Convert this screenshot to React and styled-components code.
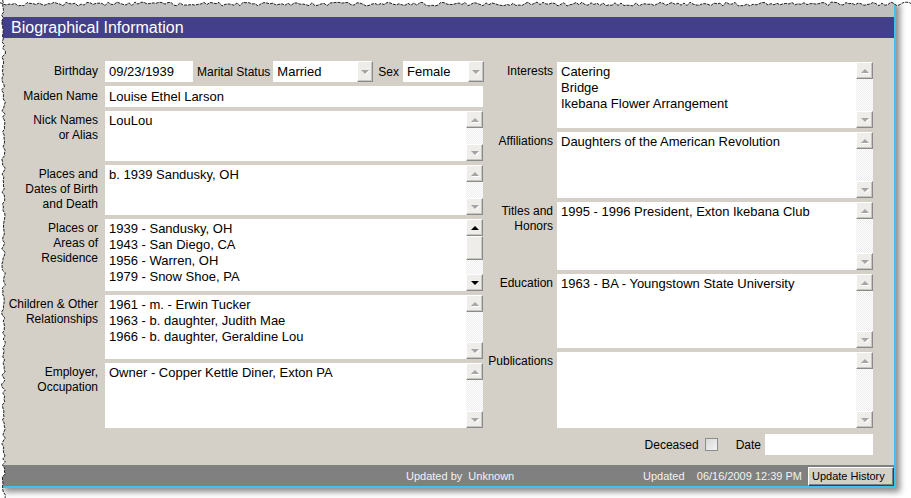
import React from "react";
import styled, { createGlobalStyle } from "styled-components";

const GlobalStyle = createGlobalStyle`
  html, body {
    margin: 0;
    padding: 0;
    background: #fff;
  }
  body {
    font-family: "Liberation Sans", Arial, sans-serif;
    color: #000;
  }
`

const Page = styled.div`
  position: relative;
  width: 911px;
  height: 498px;
  overflow: hidden;
  background: #fff;
`

const Frame = styled.div`
  width: 894px;
  border-right: 2px solid #45c0ee;
  border-bottom: 2px solid #45c0ee;
  box-shadow: 4px 4px 6px rgba(0, 0, 0, 0.45);
`

const TopBand = styled.div`
  height: 17px;
  background: #c0c0c0;
`

const Header = styled.div`
  height: 21px;
  line-height: 21px;
  padding-left: 11px;
  background: #443f8b;
  color: #fff;
  font-size: 16px;
`

const Body = styled.div`
  height: 427px;
  box-sizing: border-box;
  padding-top: 23px;
  background: #d4d0c8;
  display: flex;
  align-items: flex-start;
`

const LeftCol = styled.div`
  width: 483px;
  display: grid;
  grid-template-columns: 98px 378px;
  grid-template-rows: 21px 21px 50px 50px 72px 64px 65px;
  column-gap: 7px;
  row-gap: 4px;
`

const RightCol = styled.div`
  width: 390px;
  margin-top: 1px;
  display: grid;
  grid-template-columns: 70px 316px;
  grid-template-rows: 66px 66px 68px 74px 76px 21px;
  column-gap: 4px;
  row-gap: 4px;
`

const Label = styled.div`
  font-size: 12px;
  line-height: 15px;
  text-align: right;
  padding-top: ${p => (p.$center ? "3px" : "2px")};
  white-space: ${p => (p.$center ? "nowrap" : "pre-line")};
`

const InlineLabel = styled.span`
  font-size: 12px;
  white-space: nowrap;
`

const FieldRow = styled.div`
  display: flex;
  align-items: center;
  justify-content: ${p => (p.$end ? "flex-end" : "flex-start")};
  margin-top: ${p => p.$mt || 0}px;
`

const TextBox = styled.div`
  box-sizing: border-box;
  height: 21px;
  width: ${p => (p.$w ? `${p.$w}px` : "auto")};
  flex: ${p => (p.$w ? "none" : "1")};
  padding: 0 4px;
  background: #fff;
  font-size: 13px;
  line-height: 21px;
  white-space: nowrap;
  overflow: hidden;
`

const Select = styled.div`
  display: flex;
  height: 21px;
  width: ${p => p.$w}px;
  flex: none;
  background: #fff;
`

const SelectValue = styled.div`
  flex: 1;
  padding: 0 4px;
  font-size: 13px;
  line-height: 21px;
`

const RaisedButton = styled.div`
  box-sizing: border-box;
  width: ${p => p.$w || 17}px;
  height: ${p => p.$h || 17}px;
  flex: none;
  background: #eeedea;
  border: 1px solid;
  border-color: #fff #8a8a8a #8a8a8a #fff;
  box-shadow: inset -1px -1px 0 #c8c6c0;
  display: flex;
  align-items: center;
  justify-content: center;
`

const Arrow = styled.span`
  width: 0;
  height: 0;
  border-left: 4px solid transparent;
  border-right: 4px solid transparent;
  ${p => (p.$up ? "border-bottom" : "border-top")}: 4px solid ${p => (p.$on ? "#000" : "#a5a5a5")};
  filter: ${p => (p.$on ? "none" : "drop-shadow(1px 1px 0 #fff)")};
`

const Area = styled.div`
  display: flex;
  background: #fff;
  min-height: 0;
`

const AreaText = styled.div`
  flex: 1;
  padding: 2px 4px;
  font-size: 13px;
  line-height: 16px;
  white-space: pre-line;
  overflow: hidden;
`

const Scroll = styled.div`
  width: 17px;
  display: flex;
  flex-direction: column;
  background: repeating-conic-gradient(#ffffff 0 25%, #ececec 0 50%) 0 0 / 2px 2px;
`

const Track = styled.div`
  flex: 1;
`

const Check = styled.span`
  box-sizing: border-box;
  display: inline-block;
  width: 13px;
  height: 13px;
  margin-left: 6px;
  border: 1px solid #8c8c8c;
  background: linear-gradient(135deg, #d8d8d8, #f4f4f4);
`

const Footer = styled.div`
  height: 21px;
  background: #808080;
  color: #f2f2f2;
  font-size: 11px;
  display: flex;
  align-items: center;
`

const FooterText = styled.span`
  margin-left: ${p => p.$ml || 0}px;
  white-space: pre;
`

const HistoryButton = styled.div`
  box-sizing: border-box;
  margin-left: 6px;
  margin-top: 2px;
  width: 86px;
  height: 19px;
  background: #d4d0c8;
  color: #000;
  border: 1px solid;
  border-color: #fff #404040 #404040 #fff;
  box-shadow: inset -1px -1px 0 #808080;
  font-size: 11px;
  line-height: 17px;
  padding-left: 3px;
`

const TornEdge = styled.svg`
  position: absolute;
  left: 0;
  top: 0;
  pointer-events: none;
`

const rnd = i => {
  const v = Math.sin(i * 12.9898 + 78.233) * 43758.5453;
  return v - Math.floor(v);
};

const topPts = [];
for (let x = 0; x <= 912; x += 3) topPts.push([x, 2 + rnd(x) * 4]);
const leftPts = [];
for (let y = 0; y <= 498; y += 3) leftPts.push([1.5 + rnd(y + 1000) * 4, y]);
const line = pts => pts.map(([x, y]) => `${x.toFixed(1)},${y.toFixed(1)}`).join(" ");

const Torn = () => (
  <TornEdge width="911" height="498">
    <polygon points={`0,0 ${line(topPts)} 912,0`} fill="#fff" />
    <polygon points={`0,0 ${line(leftPts)} 0,498`} fill="#fff" />
    <polyline points={line(topPts)} fill="none" stroke="#222" strokeWidth="1" strokeDasharray="3 1" />
    <polyline points={line(leftPts)} fill="none" stroke="#222" strokeWidth="1" strokeDasharray="3 1" />
  </TornEdge>
)

const ScrollBar = ({ on }) => (
  <Scroll>
    <RaisedButton><Arrow $up $on={on} /></RaisedButton>
    {on && <RaisedButton $h={24} />}
    <Track />
    <RaisedButton><Arrow $on={on} /></RaisedButton>
  </Scroll>
)

const TextArea = ({ children, on }) => (
  <Area>
    <AreaText>{children}</AreaText>
    <ScrollBar on={on} />
  </Area>
)

const Dropdown = ({ w, value }) => (
  <Select $w={w}>
    <SelectValue>{value}</SelectValue>
    <RaisedButton $w={16} $h={21}><Arrow /></RaisedButton>
  </Select>
)

const left = [
  ["Nick Names\nor Alias", "LouLou"],
  ["Places and\nDates of Birth\nand Death", "b. 1939 Sandusky, OH"],
  ["Places or\nAreas of\nResidence", "1939 - Sandusky, OH\n1943 - San Diego, CA\n1956 - Warren, OH\n1979 - Snow Shoe, PA", true],
  ["Children & Other\nRelationships", "1961 - m. - Erwin Tucker\n1963 - b. daughter, Judith Mae\n1966 - b. daughter, Geraldine Lou"],
  ["Employer,\nOccupation", "Owner - Copper Kettle Diner, Exton PA"],
]

const right = [
  ["Interests", "Catering\nBridge\nIkebana Flower Arrangement"],
  ["Affiliations", "Daughters of the American Revolution"],
  ["Titles and\nHonors", "1995 - 1996 President, Exton Ikebana Club"],
  ["Education", "1963 - BA - Youngstown State University"],
  ["Publications", ""],
]

const App = () => {
  return (
    <Page>
      <GlobalStyle />
      <Frame>
        <TopBand />
        <Header>Biographical Information</Header>
        <Body>
          <LeftCol>
            <Label $center>Birthday</Label>
            <FieldRow>
              <TextBox $w={88}>09/23/1939</TextBox>
              <InlineLabel style={{ marginLeft: 4, marginRight: 3 }}>Marital Status</InlineLabel>
              <Dropdown w={100} value="Married" />
              <InlineLabel style={{ marginLeft: 5, marginRight: 4 }}>Sex</InlineLabel>
              <Dropdown w={81} value="Female" />
            </FieldRow>
            <Label $center>Maiden Name</Label>
            <TextBox>Louise Ethel Larson</TextBox>
            {left.map(([label, text, on]) => (
              <React.Fragment key={label}>
                <Label>{label}</Label>
                <TextArea on={on}>{text}</TextArea>
              </React.Fragment>
            ))}
          </LeftCol>
          <RightCol>
            {right.map(([label, text]) => (
              <React.Fragment key={label}>
                <Label>{label}</Label>
                <TextArea>{text}</TextArea>
              </React.Fragment>
            ))}
            <div />
            <FieldRow $end $mt={4}>
              <InlineLabel>Deceased</InlineLabel>
              <Check />
              <InlineLabel style={{ marginLeft: 18, marginRight: 4 }}>Date</InlineLabel>
              <TextBox $w={108} />
            </FieldRow>
          </RightCol>
        </Body>
        <Footer>
          <FooterText $ml={406}>Updated by  Unknown</FooterText>
          <FooterText style={{ marginLeft: "auto" }}>Updated    06/16/2009 12:39 PM</FooterText>
          <HistoryButton>Update History</HistoryButton>
        </Footer>
      </Frame>
      <Torn />
    </Page>
  )
}

export default App
